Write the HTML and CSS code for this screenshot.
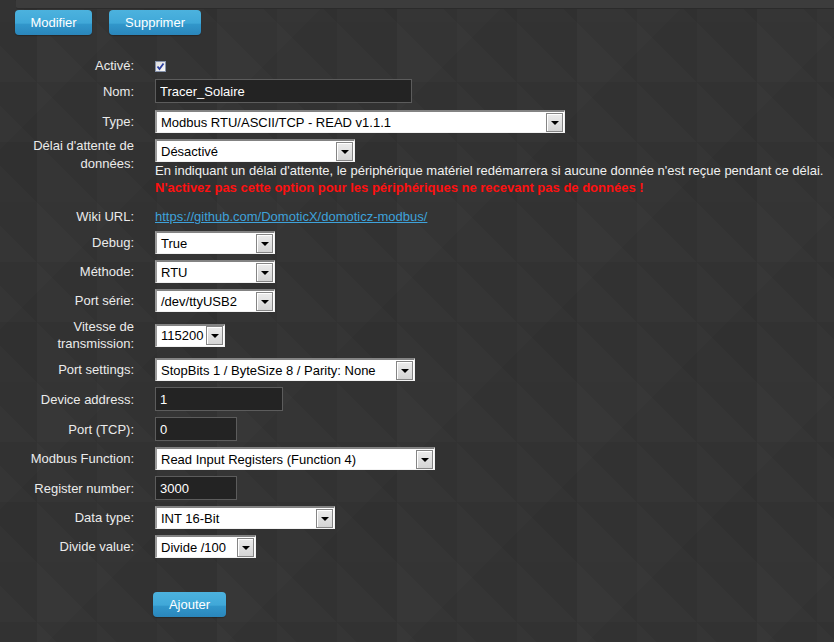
FILE: index.html
```html
<!DOCTYPE html>
<html lang="fr">
<head>
  <meta charset="UTF-8">
  <meta name="viewport" content="width=device-width, initial-scale=1.0">
  <title>Matériel - Modbus</title>
  <link rel="stylesheet" href="styles.css">
</head>
<body>

<div class="topbar"></div>

<div class="actions">
  <button class="btn">Modifier</button>
  <button class="btn">Supprimer</button>
</div>

<form class="hwform" onsubmit="return false;">
  <div class="row row-check">
    <label>Activé:</label>
    <span class="check">
      <svg width="11" height="11" viewBox="0 0 11 11"><path d="M2.5 5.5 L4.5 8 L8.5 2.5" fill="none" stroke="#2b3fa0" stroke-width="1.8"/></svg>
    </span>
  </div>

  <div class="row row-name">
    <label>Nom:</label>
    <input class="text w256" type="text" value="Tracer_Solaire">
  </div>

  <div class="row">
    <label>Type:</label>
    <span class="combo w410"><span class="val">Modbus RTU/ASCII/TCP - READ v1.1.1</span><span class="arrow"></span></span>
  </div>

  <div class="row row-top">
    <label class="lbl-wrap">Délai d'attente de données:</label>
    <div>
      <span class="combo w200"><span class="val">Désactivé</span><span class="arrow"></span></span>
      <div class="help">En indiquant un délai d'attente, le périphérique matériel redémarrera si aucune donnée n'est reçue pendant ce délai.</div>
      <div class="help warn">N'activez pas cette option pour les périphériques ne recevant pas de données !</div>
    </div>
  </div>

  <div class="row row-wiki">
    <label>Wiki URL:</label>
    <a class="wiki" href="#">https://github.com/DomoticX/domoticz-modbus/</a>
  </div>

  <div class="row">
    <label>Debug:</label>
    <span class="combo w120"><span class="val">True</span><span class="arrow"></span></span>
  </div>

  <div class="row">
    <label>Méthode:</label>
    <span class="combo w120"><span class="val">RTU</span><span class="arrow"></span></span>
  </div>

  <div class="row">
    <label>Port série:</label>
    <span class="combo w120"><span class="val">/dev/ttyUSB2</span><span class="arrow"></span></span>
  </div>

  <div class="row row-speed">
    <label class="lbl-wrap">Vitesse de transmission:</label>
    <span class="combo w70"><span class="val">115200</span><span class="arrow"></span></span>
  </div>

  <div class="row">
    <label>Port settings:</label>
    <span class="combo w260"><span class="val">StopBits 1 / ByteSize 8 / Parity: None</span><span class="arrow"></span></span>
  </div>

  <div class="row">
    <label>Device address:</label>
    <input class="text w128" type="text" value="1">
  </div>

  <div class="row">
    <label>Port (TCP):</label>
    <input class="text w82" type="text" value="0">
  </div>

  <div class="row">
    <label>Modbus Function:</label>
    <span class="combo w280"><span class="val">Read Input Registers (Function 4)</span><span class="arrow"></span></span>
  </div>

  <div class="row">
    <label>Register number:</label>
    <input class="text w82" type="text" value="3000">
  </div>

  <div class="row">
    <label>Data type:</label>
    <span class="combo w180"><span class="val">INT 16-Bit</span><span class="arrow"></span></span>
  </div>

  <div class="row">
    <label>Divide value:</label>
    <span class="combo w101"><span class="val">Divide /100</span><span class="arrow"></span></span>
  </div>

  <div class="add">
    <button class="btn">Ajouter</button>
  </div>
</form>

</body>
</html>
```

FILE: styles.css
```css
html, body {
  margin: 0;
  padding: 0;
}
body {
  min-height: 100vh;
  background-color: #333;
  /* faint triangle tiles */
  background-image:
    linear-gradient(45deg, rgba(255,255,255,0.008) 50%, rgba(0,0,0,0.012) 50%),
    linear-gradient(-45deg, rgba(0,0,0,0.03) 25%, transparent 25%, transparent 75%, rgba(255,255,255,0.012) 75%);
  background-size: 60px 60px, 180px 180px;
  background-position: 37px 22px, 37px 22px;
  font-family: "Liberation Sans", Arial, sans-serif;
  font-size: 13px;
  color: #e8e8e8;
}
.topbar {
  margin-left: 16px;
  height: 8px;
  background-color: #3c3c3c;
  border-bottom: 1px solid #2b2b2b;
  border-bottom-left-radius: 2px;
}
.actions {
  display: flex;
  gap: 17px;
  margin: 1px 0 20px 15px;
}
.btn {
  height: 25px;
  padding: 0 15px;
  border: none;
  border-radius: 4px;
  background: linear-gradient(#4cb2de, #40a8d8 52%, #3196ca 58%, #2a86bb);
  color: #fff;
  font-family: "Liberation Sans", Arial, sans-serif;
  font-size: 13px;
  cursor: pointer;
  box-shadow: 0 1px 1px rgba(0,0,0,0.25);
}
.actions .btn:first-child {
  width: 77px;
}
.actions .btn:last-child {
  width: 92px;
}

.row {
  display: grid;
  grid-template-columns: 134px 1fr;
  column-gap: 21px;
  align-items: center;
  padding: 3px 0;
}
.row label {
  text-align: right;
  line-height: 15px;
  color: #ebebeb;
}
.row-check {
  line-height: 15px;
}
.row-name {
  margin-bottom: 1px;
}
.row-top {
  align-items: start;
}
.lbl-wrap {
  line-height: 18px !important;
}
.row-top .lbl-wrap {
  margin-top: -2px;
}
.row-speed .lbl-wrap {
  line-height: 17px !important;
}
.row-wiki {
  margin-top: 6px;
  line-height: 17px;
}

.check {
  display: inline-block;
  width: 11px;
  height: 11px;
  margin-top: 1px;
  box-sizing: border-box;
  border: 1px solid #8592ab;
  background: linear-gradient(135deg, #dcdcdc, #fafafa);
  position: relative;
}
.check svg {
  position: absolute;
  left: -1px;
  top: -1px;
}

.text {
  box-sizing: border-box;
  height: 24px;
  padding: 0 4px;
  background-color: #232323;
  border: 1px solid #5c5c5c;
  color: #fff;
  font-family: "Liberation Sans", Arial, sans-serif;
  font-size: 13px;
  outline: none;
}

.combo {
  display: flex;
  align-items: center;
  box-sizing: border-box;
  height: 23px;
  background-color: #fff;
  border-top: 2px solid #838383;
  border-left: 2px solid #9a9a9a;
  border-right: 1px solid #f2f2f2;
  border-bottom: 1px solid #f2f2f2;
  color: #000;
}
.combo .val {
  flex: 1;
  padding-left: 4px;
  white-space: nowrap;
  overflow: hidden;
}
.combo .arrow {
  box-sizing: border-box;
  width: 17px;
  height: 19px;
  margin-right: 1px;
  border: 1px solid #858585;
  box-shadow: inset 1px 1px 0 #fff;
  background: linear-gradient(#ececec, #d4d4d4);
  display: flex;
  align-items: center;
  justify-content: center;
}
.combo .arrow::before {
  content: "";
  width: 0;
  height: 0;
  border-left: 4px solid transparent;
  border-right: 4px solid transparent;
  border-top: 4px solid #000;
  margin-top: 1px;
}

.w70 { width: 70px; }
.w82 { width: 82px; }
.w101 { width: 101px; }
.w120 { width: 120px; }
.w128 { width: 128px; }
.w180 { width: 180px; }
.w200 { width: 200px; }
.w256 { width: 257px; }
.w260 { width: 260px; }
.w280 { width: 280px; }
.w410 { width: 410px; }

.help {
  line-height: 17px;
  white-space: nowrap;
  color: #f0f0f0;
}
.warn {
  color: #ff1010;
  font-weight: bold;
}
.wiki {
  color: #3ea2da;
  text-decoration: underline;
}

.add {
  padding: 31px 0 0 153px;
}
.add .btn {
  width: 73px;
}
```
